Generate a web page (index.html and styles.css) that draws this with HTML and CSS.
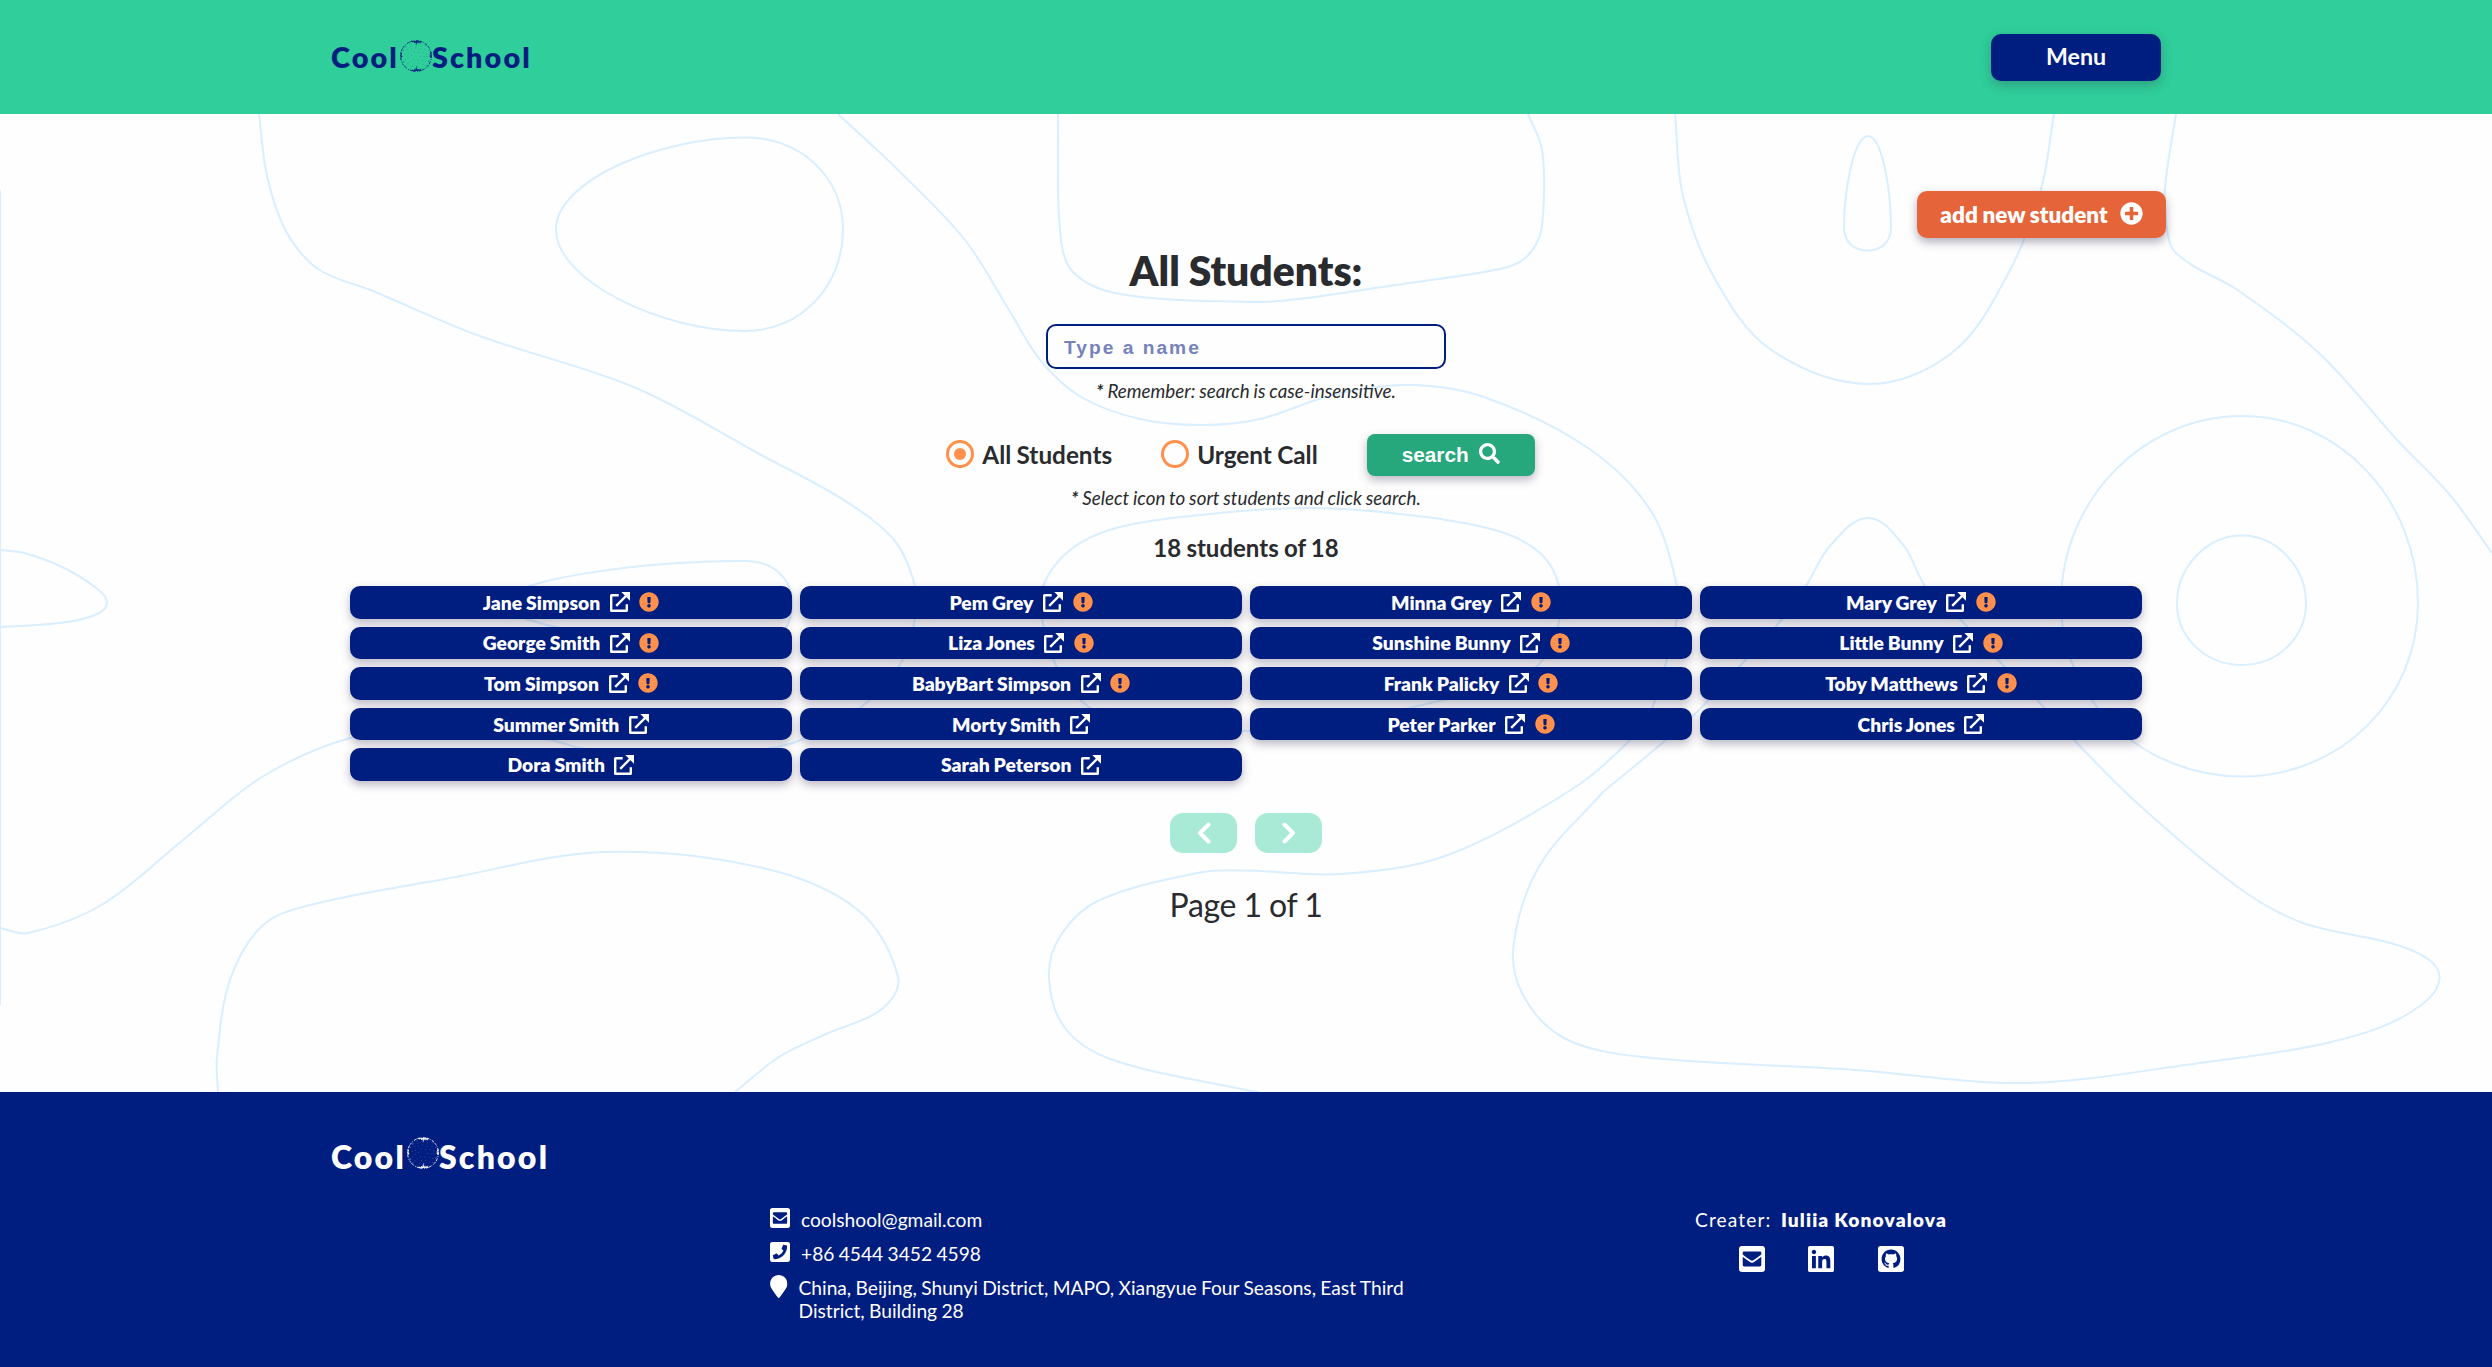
FILE: index.html
```html
<!DOCTYPE html>
<html lang="en">
<head>
<meta charset="utf-8">
<title>Cool School</title>
<link rel="stylesheet" href="styles.css">
</head>
<body>
<svg class="sprite" aria-hidden="true">
  <symbol id="plus" viewBox="0 0 512 512"><path d="M256 8C119 8 8 119 8 256s111 248 248 248 248-111 248-248S393 8 256 8zm144 276c0 6.600-5.400 12-12 12h-92v92c0 6.600-5.400 12-12 12h-56c-6.600 0-12-5.400-12-12v-92h-92c-6.600 0-12-5.400-12-12v-56c0-6.600 5.400-12 12-12h92v-92c0-6.600 5.400-12 12-12h56c6.600 0 12 5.400 12 12v92h92c6.600 0 12 5.400 12 12v56z"/></symbol>
  <symbol id="search" viewBox="0 0 512 512"><path d="M505 442.700L405.300 343c-4.500-4.500-10.600-7-17-7H372c27.600-35.300 44-79.700 44-128C416 93.100 322.900 0 208 0S0 93.100 0 208s93.100 208 208 208c48.300 0 92.700-16.400 128-44v16.300c0 6.400 2.500 12.500 7 17l99.700 99.700c9.400 9.400 24.600 9.400 33.900 0l28.300-28.300c9.400-9.400 9.400-24.600.1-34zM208 336c-70.700 0-128-57.200-128-128 0-70.700 57.200-128 128-128 70.700 0 128 57.200 128 128 0 70.700-57.200 128-128 128z"/></symbol>
  <symbol id="alert" viewBox="0 0 512 512"><path d="M504 256c0 136.997-111.043 248-248 248S8 392.997 8 256C8 119.083 119.043 8 256 8s248 111.083 248 248zm-248 50c-25.405 0-46 20.595-46 46s20.595 46 46 46 46-20.595 46-46-20.595-46-46-46zm-43.673-165.346l7.418 136c.347 6.364 5.609 11.346 11.982 11.346h48.546c6.373 0 11.635-4.982 11.982-11.346l7.418-136c.375-6.874-5.098-12.654-11.982-12.654h-63.383c-6.884 0-12.356 5.780-11.981 12.654z"/></symbol>
  <symbol id="open" viewBox="0 0 20 20"><path class="line" d="M8.700 3.200H1.600q-.4 0-.4.4V18.400q0 .4.400.4H16.400q.4 0 .4-.4V12.200M6.200 13.800L16.500 3.500"/><path d="M11.300 0H20V8.700z"/></symbol>
  <symbol id="mail" viewBox="0 32 448 448"><path d="M400 32H48C21.490 32 0 53.490 0 80v352c0 26.510 21.490 48 48 48h352c26.510 0 48-21.490 48-48V80c0-26.510-21.490-48-48-48zM178.117 262.104C87.429 196.287 88.353 196.121 64 177.167V152c0-13.255 10.745-24 24-24h272c13.255 0 24 10.745 24 24v25.167c-24.371 18.969-23.434 19.124-114.117 84.938-10.500 7.655-31.392 26.120-45.883 25.894-14.503.218-35.367-18.227-45.883-25.895zM384 217.775V360c0 13.255-10.745 24-24 24H88c-13.255 0-24-10.745-24-24V217.775c13.958 10.794 33.329 25.236 95.303 70.214 14.162 10.341 37.975 32.145 64.694 32.010 26.887.134 51.036-22.041 64.720-32.025 61.958-44.964 81.325-59.406 95.283-70.199z"/></symbol>
  <symbol id="phone" viewBox="0 32 448 448"><path d="M400 32H48C21.490 32 0 53.490 0 80v352c0 26.510 21.490 48 48 48h352c26.510 0 48-21.490 48-48V80c0-26.510-21.490-48-48-48zM94 416c-7.033 0-13.057-4.873-14.616-11.627l-14.998-65a15 15 0 0 1 8.707-17.160l69.998-29.999a15 15 0 0 1 17.518 4.289l30.997 37.885c48.944-22.963 88.297-62.858 110.781-110.780l-37.886-30.997a15.001 15.001 0 0 1-4.289-17.518l30-69.998a15 15 0 0 1 17.160-8.707l65 14.998A14.997 14.997 0 0 1 384 126c0 160.292-129.945 290-290 290z"/></symbol>
  <symbol id="marker" viewBox="0 0 384 512"><path d="M172.268 501.670C26.970 291.031 0 269.413 0 192 0 85.961 85.961 0 192 0s192 85.961 192 192c0 77.413-26.970 99.031-172.268 309.670-9.535 13.774-29.930 13.773-39.464 0z"/></symbol>
  <symbol id="linkedin" viewBox="0 32 448 448"><path d="M416 32H31.900C14.300 32 0 46.500 0 64.300v383.400C0 465.500 14.300 480 31.900 480H416c17.600 0 32-14.500 32-32.300V64.300c0-17.800-14.400-32.300-32-32.300zM135.400 416H69V202.200h66.500V416zm-33.200-243c-21.300 0-38.500-17.300-38.500-38.500S80.900 96 102.200 96c21.200 0 38.500 17.300 38.500 38.500 0 21.300-17.200 38.500-38.500 38.500zm282.100 243h-66.400V312c0-24.800-.5-56.700-34.500-56.700-34.600 0-39.900 27-39.900 54.900V416h-66.400V202.200h63.700v29.200h.9c8.900-16.800 30.600-34.500 62.900-34.500 67.200 0 79.700 44.300 79.700 101.900V416z"/></symbol>
  <symbol id="github" viewBox="0 0 448 448"><rect width="448" height="448" rx="48"/><path class="cutout" transform="translate(62 62) scale(20.300)" d="M8 0C3.580 0 0 3.580 0 8c0 3.540 2.290 6.530 5.470 7.590.4.07.55-.17.55-.38 0-.19-.01-.82-.01-1.490-2.010.37-2.530-.49-2.690-.94-.09-.23-.48-.94-.82-1.130-.28-.15-.68-.52-.01-.53.63-.01 1.080.58 1.230.82.72 1.210 1.870.87 2.330.66.07-.52.28-.87.51-1.070-1.780-.2-3.640-.89-3.640-3.950 0-.87.31-1.590.82-2.150-.08-.2-.36-1.020.08-2.120 0 0 .67-.21 2.200.82.64-.18 1.320-.27 2-.27s1.360.09 2 .27c1.530-1.040 2.200-.82 2.200-.82.44 1.100.16 1.920.08 2.120.51.56.82 1.270.82 2.150 0 3.070-1.870 3.750-3.650 3.950.29.25.54.73.54 1.480 0 1.070-.01 1.930-.01 2.200 0 .21.15.46.55.38A8.010 8.010 0 0 0 16 8c0-4.420-3.580-8-8-8z"/></symbol>
  <symbol id="globe" viewBox="0 0 32 32">
    <circle class="ring" cx="16" cy="16" r="15.400" stroke-dasharray="2 1 1 1.500 3 1"/>
    <circle class="ring faint" cx="16" cy="16" r="13.800" stroke-dasharray="1 3 2 4 1 5"/>
    <circle class="ring faint" cx="16" cy="16" r="11" stroke-dasharray=".6 4.500"/>
    <circle class="ring faint" cx="16" cy="16" r="8" stroke-dasharray=".6 4"/>
    <circle class="ring faint" cx="16" cy="16" r="4.500" stroke-dasharray=".6 4"/>
    <path d="M10.500 1l2 1.600 1-1.200 1 1.800 1-1.200.7 3.400.8-3.400 1 1.500 1-1.500 1 1.200 2-2zM10.500 31l2-1.600 1 1 1-1.600 1 1.200.7-4.500.8 4.500 1-1.500 1 1.500 1-1.200 2 2zM.6 12l1.500 1-.7 2 .8 1.500-.8 1.500-.8-1zM31.400 12l-1.500 1 .7 2-.8 1.500.8 1.500.8-1z"/>
  </symbol>
</svg>

<header class="header">
  <div class="wrap header-row">
    <a class="logo">Cool<svg><use href="#globe"/></svg>School</a>
    <button class="menu">Menu</button>
  </div>
</header>

<main class="main">
  <svg class="waves" viewBox="0 114 2492 978" preserveAspectRatio="none" aria-hidden="true"></svg>
  <div class="content">
    <button class="add">add new student <svg><use href="#plus"/></svg></button>
    <h1>All Students:</h1>
    <form class="form">
      <input type="text" placeholder="Type a name">
      <p class="hint"><b>*</b> Remember: search is case-insensitive.</p>
      <div class="filters">
        <label class="option checked"><i></i>All Students</label>
        <label class="option"><i></i>Urgent Call</label>
        <button type="button" class="submit">search <svg><use href="#search"/></svg></button>
      </div>
      <p class="hint second"><b>*</b> Select icon to sort students and click search.</p>
    </form>
    <p class="count">18 students of 18</p>
    <ul class="students"></ul>
    <div class="pager">
      <button><svg viewBox="0 0 14 22"><path d="M11.500 2.500L3 11l8.500 8.500"/></svg></button>
      <button><svg viewBox="0 0 14 22"><path d="M2.500 2.500L11 11l-8.500 8.500"/></svg></button>
    </div>
    <p class="page">Page 1 of 1</p>
  </div>
</main>

<footer class="footer">
  <div class="wrap">
    <a class="logo">Cool<svg><use href="#globe"/></svg>School</a>
    <div class="footer-row">
      <address class="contacts">
        <p><svg class="sq"><use href="#mail"/></svg><span>coolshool@gmail.com</span></p>
        <p><svg class="sq"><use href="#phone"/></svg><span>+86 4544 3452 4598</span></p>
        <p><svg class="pin"><use href="#marker"/></svg><span>China, Beijing, Shunyi District, MAPO, Xiangyue Four Seasons, East Third District, Building 28</span></p>
      </address>
      <div class="creator">
        <p>Creater: <b>Iuliia Konovalova</b></p>
        <div class="social">
          <svg><use href="#mail"/></svg><svg><use href="#linkedin"/></svg><svg><use href="#github"/></svg>
        </div>
      </div>
    </div>
  </div>
</footer>
<script src="app.js"></script>
</body>
</html>
```
FILE: styles.css
```css
* { box-sizing: border-box; }
body { margin: 0; font-family: Lato, sans-serif; word-spacing: -.035em; color: #292b2e; background: #fefefe; }
h1, p, ul { margin: 0; padding: 0; }
button { border: 0; font-family: inherit; word-spacing: inherit; color: #fff; }
svg { fill: currentColor; flex: none; }
.sprite { position: absolute; width: 0; height: 0; }
.wrap { width: 1830px; margin: 0 auto; }

.header { height: 114px; background: #2fce9a; }
.header-row { display: flex; justify-content: space-between; align-items: center; height: 114px; padding-top: 1px; }
.logo { display: flex; align-items: center; margin-bottom: 1px; font-size: 28.800px; font-weight: 800; letter-spacing: 2.100px; color: #001d80; }
.logo svg { width: 32px; height: 32px; margin: 0 0 3px 1px; }
.ring { fill: none; stroke: currentColor; stroke-width: .9; }
.faint { opacity: .4; }
.menu { width: 170px; height: 47px; padding-bottom: 4px; border-radius: 10px; background: #001d80; font-size: 23.200px; font-weight: 700; box-shadow: 0 4px 12px rgba(50, 50, 80, .3); }

.main { position: relative; height: 978px; }
.waves { position: absolute; inset: 0; width: 100%; height: 100%; fill: none; stroke: #d9efff; stroke-width: 2; }
.content { position: relative; display: flex; flex-direction: column; align-items: center; width: 1840px; margin: 0 auto; padding-top: 77px; }
.add { display: flex; align-items: center; justify-content: center; gap: 12px; align-self: flex-end; width: 249px; height: 47px; border-radius: 10px; background: #e66439; font-size: 22.500px; font-weight: 800; box-shadow: 0 4px 10px rgba(30, 20, 60, .35); }
.add svg { width: 23px; height: 23px; margin-bottom: 2px; }
h1 { margin-top: 9px; font-size: 40.800px; line-height: 48px; font-weight: 800; }
.form { display: flex; flex-direction: column; align-items: center; }
input { width: 400px; height: 45px; margin-top: 29px; padding: 2px 16px 0; border: 2px solid #001d80; border-radius: 10px; background: transparent; font: 700 19.200px "Liberation Sans", Arial, sans-serif; letter-spacing: 2px; }
input::placeholder { color: #7582bd; opacity: 1; }
.hint { margin-top: 10px; font-size: 18.800px; line-height: 24px; font-style: italic; }
.filters { display: flex; align-items: center; height: 42px; margin-top: 31px; margin-left: -11px; }
.option { display: flex; align-items: center; gap: 8px; margin: 0 49px 2px 0; font-size: 24.300px; font-weight: 700; }
.option i { display: grid; place-items: center; width: 28px; height: 28px; border: 3px solid #ff914d; border-radius: 50%; }
.checked i::after { content: ""; width: 12px; height: 12px; border-radius: 50%; background: #ff914d; }
.submit { display: flex; align-items: center; justify-content: center; gap: 10px; width: 168px; height: 42px; border-radius: 8px; background: #27a77c; font: 700 20.800px "Liberation Sans", Arial, sans-serif; box-shadow: 0 4px 10px rgba(30, 20, 60, .3); }
.submit svg { width: 21px; height: 21px; margin-bottom: 3px; }
.second { margin-top: 10px; }
.count { margin-top: 23px; font-size: 24px; line-height: 29px; font-weight: 700; }
.students { display: grid; grid-template-columns: repeat(4, 442px); gap: 8px; margin-top: 24px; list-style: none; }
.students li { display: flex; align-items: center; justify-content: center; height: 32.600px; border-radius: 10px; background: #001d80; color: #fff; font-size: 19.300px; font-weight: 800; box-shadow: 0 4px 10px rgba(30, 20, 60, .3); }
.students svg { width: 20px; height: 20px; margin-left: 9.500px; }
.students .urgent { color: #ff914d; }
.line { fill: none; stroke: currentColor; stroke-width: 2.400; }
.pager { display: flex; gap: 18px; margin-top: 32px; }
.pager button { display: grid; place-items: center; width: 67px; height: 40px; padding: 0; border-radius: 13px; background: #a8ead5; }
.pager svg { width: 14px; height: 22px; fill: none; stroke: #fff; stroke-width: 4; stroke-linecap: round; stroke-linejoin: round; }
.page { margin-top: 33px; font-size: 32px; line-height: 38px; letter-spacing: -.3px; }

.footer { height: 275px; padding-top: 45px; background: #001d80; color: #fff; }
.footer .logo { height: 40px; margin: -1px 0 1px; color: #fff; font-size: 32px; letter-spacing: 2.200px; }
.footer .logo svg { margin-bottom: 6px; }
.footer-row { display: flex; justify-content: space-between; padding: 31px 217px 0 439px; }
.contacts { width: 640px; font-style: normal; font-size: 19.200px; line-height: 23px; }
.contacts p { display: flex; margin-bottom: 11px; }
.sq { width: 20px; height: 20px; margin: 0 11px 0 0; }
.pin { width: 17.500px; height: 23px; margin: -1px 11px 0 0; }
.creator { display: flex; flex-direction: column; align-items: center; width: 252px; margin-right: -3px; font-size: 19.200px; line-height: 23px; letter-spacing: 1.100px; white-space: nowrap; }
.creator b { margin-left: 4px; font-weight: 800; }
.social { display: flex; gap: 43.500px; margin-top: 15px; }
.social svg { width: 26px; height: 26px; }
.cutout { fill: #001d80; }
```
FILE: app.js
```js
// Students list: a trailing "!" marks an urgent call.
const students = ["Jane Simpson!", "Pem Grey!", "Minna Grey!", "Mary Grey!", "George Smith!", "Liza Jones!", "Sunshine Bunny!", "Little Bunny!", "Tom Simpson!", "BabyBart Simpson!", "Frank Palicky!", "Toby Matthews!", "Summer Smith", "Morty Smith", "Peter Parker!", "Chris Jones", "Dora Smith", "Sarah Peterson"];
document.querySelector(".students").innerHTML = students.map(s =>
  `<li>${s.replace("!", "")}<svg><use href="#open"/></svg>${s.endsWith("!") ? '<svg class="urgent"><use href="#alert"/></svg>' : ""}</li>`).join("");

// Background contour lines, smoothed through their points; closed lines start with "z".
const lines = [
  "0,190 0,1005",
  "259,114 267,176 286,231 318,269 373,291 477,335 636,388 763,456 842,499 894,540 915,586 915,618 902,661 865,704 803,739 771,748 660,762 580,748 551,740 450,724 350,738 262,777 183,840 103,904 28,933 0,928",
  "0,550 24,553 60,566 95,587 107,603 95,615 60,623 0,627",
  "838,114 898,170 965,240 1009,310 1041,361 1081,397 1140,419 1202,425 1260,419 1333,395 1409,385 1484,397 1588,448 1651,511 1677,586 1677,618 1667,659 1652,708 1630,740 1571,790 1445,856 1341,874 1246,870.5 1200,872.5 1100,900 1061,935 1049,977 1065,1028 1113,1060 1246,1090 1262,1093",
  "1058,114 1060,231 1073,272 1120,294 1246,302 1294,299.6 1389,286 1500,269 1524,259 1539,238 1543,215 1544,176 1541,145 1528,114",
  "z1308,508 1200,515 1116,528 1070,550 1043,586 1042,618 1053,659 1080,700 1120,720 1244,731 1340,724 1409,708 1480,690 1536,667 1558,626 1559,586 1540,553 1495,530 1400,514",
  "1675,114 1683,196 1715,279 1770,349 1868,384 1953,352 2009,272 2041,189 2054,114",
  "2176,114 2165.5,183 2166,221 2176,253 2239,291 2320,354 2398,441 2450,495 2492,553",
  "1603,792 1666,740 1692,717 1739,667 1783,618 1806,586 1830,546 1868,518 1904,546 1925,586 1959,618 1997,659 2037,700 2074,740 2136,802 2239,888 2303,923 2406,948 2439.6,977 2406,1015 2327,1043 2200,1063 2025,1083 1850,1069.5 1643,1057 1564,1038 1522,993 1514,942 1540,865 1603,792",
  "218,1092 217,1057 230,980 262,926 310,905 445,879 604,852 763,868 858,910 898,977 882,1009 826,1034 779,1057 735,1092"
];
const smooth = line => {
  const closed = line[0] === "z";
  const p = line.replace("z", "").split(" ").map(t => t.split(",").map(Number));
  const n = p.length;
  const at = i => closed ? p[(i + n) % n] : p[Math.max(0, Math.min(n - 1, i))];
  let d = "M" + p[0];
  for (let i = 0; i < (closed ? n : n - 1); i++) {
    const [a, b, c, e] = [at(i - 1), at(i), at(i + 1), at(i + 2)];
    const len = Math.hypot(c[0] - b[0], c[1] - b[1]);
    const tangent = (u, v) => {
      const l = Math.hypot(v[0] - u[0], v[1] - u[1]) || 1;
      return [(v[0] - u[0]) / l * len / 3, (v[1] - u[1]) / l * len / 3];
    };
    const t1 = tangent(a, c), t2 = tangent(b, e);
    d += `C${b[0] + t1[0]},${b[1] + t1[1]} ${c[0] - t2[0]},${c[1] - t2[1]} ${c}`;
  }
  return d;
};
const ovals = [
  "M556,229.500C556,180 660,137.600 745,137.600C802,137.600 843,178 843,229.500C843,285 802,331 745,331C660,331 556,280 556,229.500Z",
  "M505,603C505,580 640,561 745,561C775,561 792,580 792,603C792,627 780,645 745,645C640,645 505,626 505,603Z",
  "M1844,227.600C1844,190 1854,136 1868,136C1882,136 1891,190 1891,227.600C1891,242 1881,250.500 1868,250.500C1854,250.500 1844,242 1844,227.600Z",
  "M2061,603C2061,500 2143,416 2242,416C2340,416 2418,500 2418,603C2418,700 2340,776.500 2242,776.500C2143,776.500 2061,700 2061,603Z",
  "M2177,603C2177,568 2206,535.600 2242,535.600C2277,535.600 2306,568 2306,603C2306,638 2277,665 2242,665C2206,665 2177,638 2177,603Z"
];
document.querySelector(".waves").innerHTML = lines.map(smooth).concat(ovals).map(d => `<path d="${d}"/>`).join("");
```
